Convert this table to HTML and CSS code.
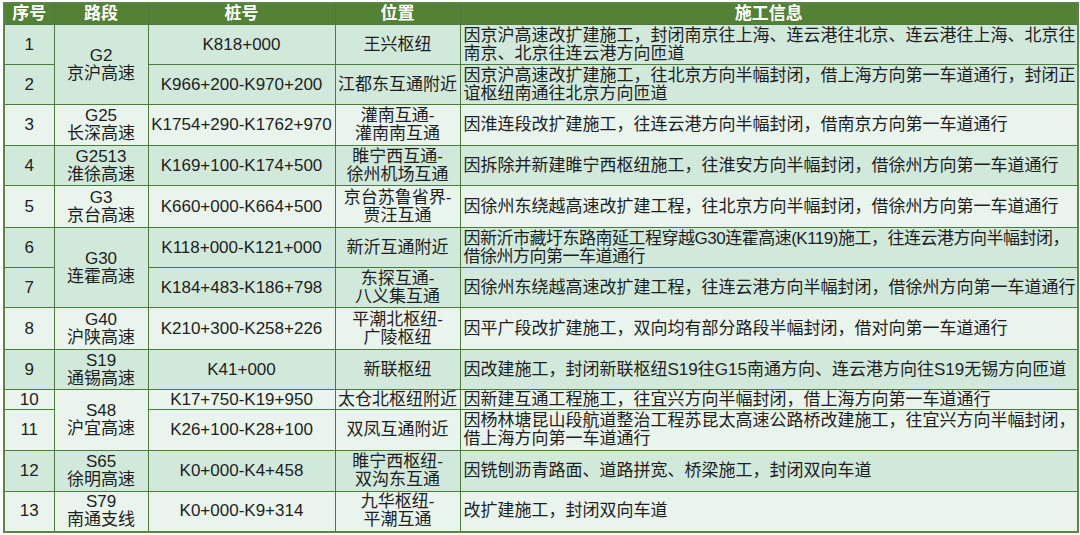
FILE: index.html
```html
<!DOCTYPE html>
<html lang="zh-CN">
<head>
<meta charset="utf-8">
<title>施工信息</title>
<link rel="stylesheet" href="styles.css">
</head>
<body>
<div class="wrap">
<table class="grid">
<colgroup>
<col class="c1"><col class="c2"><col class="c3"><col class="c4"><col class="c5">
</colgroup>
<thead>
<tr class="hd"><th>序号</th><th>路段</th><th>桩号</th><th>位置</th><th>施工信息</th></tr>
</thead>
<tbody>
<tr class="d h40">
<td>1</td><td rowspan="2">G2<br>京沪高速</td><td>K818+000</td><td>王兴枢纽</td>
<td class="info">因京沪高速改扩建施工，封闭南京往上海、连云港往北京、连云港往上海、北京往<br>南京、北京往连云港方向匝道</td>
</tr>
<tr class="d h40">
<td>2</td><td>K966+200-K970+200</td><td>江都东互通附近</td>
<td class="info">因京沪高速改扩建施工，往北京方向半幅封闭，借上海方向第一车道通行，封闭正<br>谊枢纽南通往北京方向匝道</td>
</tr>
<tr class="l h41">
<td>3</td><td>G25<br>长深高速</td><td>K1754+290-K1762+970</td><td>灌南互通-<br>灌南南互通</td>
<td class="info">因淮连段改扩建施工，往连云港方向半幅封闭，借南京方向第一车道通行</td>
</tr>
<tr class="d h40">
<td>4</td><td>G2513<br>淮徐高速</td><td>K169+100-K174+500</td><td>睢宁西互通-<br>徐州机场互通</td>
<td class="info">因拆除并新建睢宁西枢纽施工，往淮安方向半幅封闭，借徐州方向第一车道通行</td>
</tr>
<tr class="l h42">
<td>5</td><td>G3<br>京台高速</td><td>K660+000-K664+500</td><td>京台苏鲁省界-<br>贾汪互通</td>
<td class="info">因徐州东绕越高速改扩建工程，往北京方向半幅封闭，借徐州方向第一车道通行</td>
</tr>
<tr class="d h40">
<td>6</td><td rowspan="2">G30<br>连霍高速</td><td>K118+000-K121+000</td><td>新沂互通附近</td>
<td class="info tight">因新沂市藏圩东路南延工程穿越G30连霍高速(K119)施工，往连云港方向半幅封闭，<br>借徐州方向第一车道通行</td>
</tr>
<tr class="d h40">
<td>7</td><td>K184+483-K186+798</td><td>东探互通-<br>八义集互通</td>
<td class="info">因徐州东绕越高速改扩建工程，往连云港方向半幅封闭，借徐州方向第一车道通行</td>
</tr>
<tr class="l h42">
<td>8</td><td>G40<br>沪陕高速</td><td>K210+300-K258+226</td><td>平潮北枢纽-<br>广陵枢纽</td>
<td class="info">因平广段改扩建施工，双向均有部分路段半幅封闭，借对向第一车道通行</td>
</tr>
<tr class="d h40">
<td>9</td><td>S19<br>通锡高速</td><td>K41+000</td><td>新联枢纽</td>
<td class="info">因改建施工，封闭新联枢纽S19往G15南通方向、连云港方向往S19无锡方向匝道</td>
</tr>
<tr class="l h20">
<td>10</td><td rowspan="2">S48<br>沪宜高速</td><td>K17+750-K19+950</td><td>太仓北枢纽附近</td>
<td class="info">因新建互通工程施工，往宜兴方向半幅封闭，借上海方向第一车道通行</td>
</tr>
<tr class="l h41">
<td>11</td><td>K26+100-K28+100</td><td>双凤互通附近</td>
<td class="info">因杨林塘昆山段航道整治工程苏昆太高速公路桥改建施工，往宜兴方向半幅封闭，<br>借上海方向第一车道通行</td>
</tr>
<tr class="d h41">
<td>12</td><td>S65<br>徐明高速</td><td>K0+000-K4+458</td><td>睢宁西枢纽-<br>双沟东互通</td>
<td class="info">因铣刨沥青路面、道路拼宽、桥梁施工，封闭双向车道</td>
</tr>
<tr class="l h40">
<td>13</td><td>S79<br>南通支线</td><td>K0+000-K9+314</td><td>九华枢纽-<br>平潮互通</td>
<td class="info">改扩建施工，封闭双向车道</td>
</tr>
</tbody>
</table>
</div>
</body>
</html>
```
FILE: styles.css
```css
html, body {
  margin: 0;
  padding: 0;
  background: #ffffff;
}
body {
  font-family: "Liberation Sans", "Noto Sans CJK SC", sans-serif;
  color: #1e1e1e;
}
.wrap {
  padding: 2px 3px 0 3px;
}
.grid {
  border-collapse: collapse;
  table-layout: fixed;
  width: 1074px;
  border: 2px solid #5b8649;
}
.c1 { width: 50px; }
.c2 { width: 94px; }
.c3 { width: 187px; }
.c4 { width: 125px; }
.c5 { width: 618px; }
.grid th,
.grid td {
  border: 1px solid #4d7b3b;
  padding: 0;
  text-align: center;
  vertical-align: middle;
  white-space: nowrap;
  overflow: hidden;
  font-size: 17px;
  line-height: 18px;
}
.grid th {
  background: #548235;
  color: #ffffff;
  font-weight: bold;
  font-size: 17px;
  line-height: 20px;
}
.hd { height: 21px; }
.h20 { height: 20px; }
.h40 { height: 40px; }
.h41 { height: 41px; }
.h42 { height: 42px; }
.grid td.info {
  text-align: left;
  padding-left: 3px;
}
.grid td.tight {
  letter-spacing: -0.5px;
}
.d td { background: #d1e9db; }
.l td { background: #e8f4ec; }
```
